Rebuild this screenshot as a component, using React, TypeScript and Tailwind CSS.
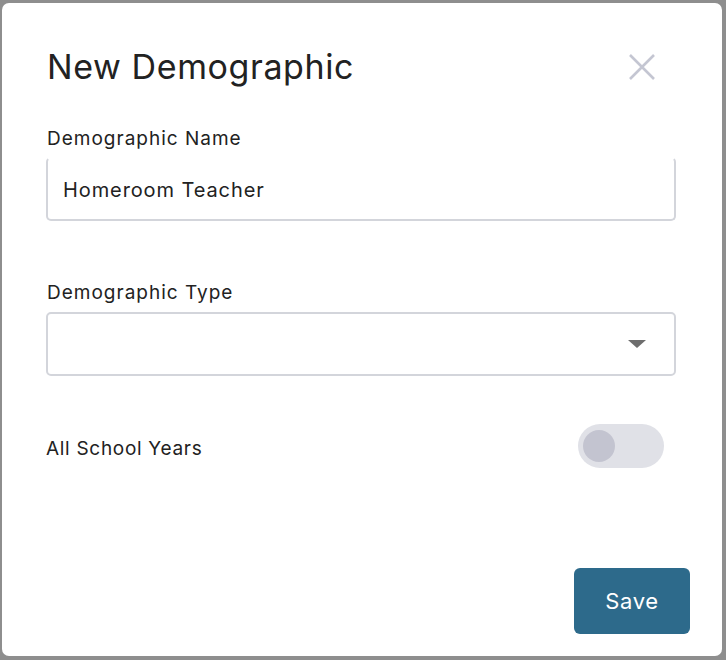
import { useState } from 'react';

export default function App() {
  const [name, setName] = useState('Homeroom Teacher');
  const [allYears, setAllYears] = useState(false);

  return (
    <div
      className="h-[660px] w-[726px] bg-[#8e8e8e] pl-[2px] pt-[3px] pr-[4px] pb-[4px]"
      style={{ fontFamily: 'Inter, "Open Sans", sans-serif' }}
    >
      <div className="flex h-full flex-col rounded-[7px] bg-white pl-[44px] pr-[46px] pt-[42px] pb-[22px]">
        <div className="flex items-center justify-between">
          <h1 className="pl-[1px] text-[34px] leading-[44px] tracking-[0.6px] text-[#222]">New Demographic</h1>
          <button className="mr-[21px] text-[#c4c6d2]" aria-label="Close">
            <svg width="26" height="26" viewBox="0 0 26 26" fill="none" stroke="currentColor" strokeWidth="2.6">
              <path d="M1 1L25 25M25 1L1 25" />
            </svg>
          </button>
        </div>

        <label className="mt-[37px] pl-[1px] text-[19px] leading-[26px] tracking-[1px] text-[#222]">Demographic Name</label>
        <input
          value={name}
          onChange={(e) => setName(e.target.value)}
          className="mt-[5px] h-[64px] w-full rounded-[5px] border-2 border-[#d3d5db] border-t-transparent pl-[15px] pr-[15px] pt-[2px] text-[20px] tracking-[0.9px] text-[#222] outline-none"
        />

        <label className="mt-[59px] pl-[1px] text-[19px] leading-[26px] tracking-[1px] text-[#222]">Demographic Type</label>
        <div className="mt-[6px] flex h-[64px] w-full items-center justify-end rounded-[5px] border-2 border-[#d3d5db] pr-[27px]">
          <svg width="20" height="10" viewBox="0 0 20 10">
            <path d="M1 1H19L10 9Z" fill="#6d6d6d" />
          </svg>
        </div>

        <div className="mt-[48px] flex items-center justify-between">
          <span className="pt-[6px] text-[19px] tracking-[0.7px] text-[#222]">All School Years</span>
          <button
            onClick={() => setAllYears(!allYears)}
            className="mr-[12px] flex h-[44px] w-[86px] items-center rounded-full bg-[#e0e1e7] px-[5px]"
            aria-label="All School Years"
          >
            <span className="h-[32px] w-[32px] rounded-full bg-[#c3c4d0]" />
          </button>
        </div>

        <div className="-mr-[14px] mt-auto flex justify-end">
          <button className="h-[66px] w-[116px] rounded-[6px] bg-[#2d6a8b] text-[22px] tracking-[0.6px] text-white">Save</button>
        </div>
      </div>
    </div>
  );
}
